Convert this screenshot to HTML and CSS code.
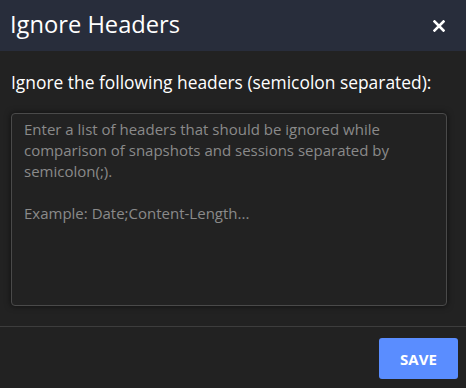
FILE: index.html
```html
<!DOCTYPE html>
<html lang="en">
<head>
    <meta charset="UTF-8">
    <meta name="viewport" content="width=device-width, initial-scale=1.0">
    <title>Ignore Headers</title>
    <link rel="stylesheet" href="styles.css">
</head>
<body>
    <div class="dialog">
        <div class="dialog-header">
            <h2>Ignore Headers</h2>
            <button class="close" aria-label="Close">
                <svg width="12" height="12" viewBox="0 0 12 12">
                    <path d="M1.5 1.5 L10.5 10.5 M10.5 1.5 L1.5 10.5" stroke="#fff" stroke-width="2.6" stroke-linecap="square"/>
                </svg>
            </button>
        </div>
        <div class="dialog-body">
            <label for="headers">Ignore the following headers (semicolon separated):</label>
            <textarea id="headers" placeholder="Enter a list of headers that should be ignored while comparison of snapshots and sessions separated by semicolon(;).&#10;&#10;Example: Date;Content-Length..." autofocus></textarea>
        </div>
        <div class="dialog-footer">
            <button class="save">SAVE</button>
        </div>
    </div>
</body>
</html>
```

FILE: styles.css
```css
html, body {
    margin: 0;
    padding: 0;
    background-color: #222222;
}
body {
    font-family: "Open Sans", sans-serif;
    color: #fff;
    width: 466px;
    height: 388px;
    overflow: hidden;
}
.dialog-header {
    height: 51px;
    background-color: #282d3b;
    display: flex;
    align-items: center;
    justify-content: space-between;
    padding: 0 21px 0 10px;
    box-sizing: border-box;
}
.dialog-header h2 {
    margin: 0;
    font-size: 23.7px;
    font-weight: 400;
    line-height: 30px;
    margin-top: -3px;
}
.close {
    background: none;
    border: none;
    padding: 0;
    width: 12px;
    height: 12px;
    cursor: pointer;
    display: flex;
}
.dialog-body {
    padding: 20px 19px 20px 11px;
    border-bottom: 1px solid #3d3d3d;
}
.dialog-body label {
    display: block;
    font-size: 17.4px;
    line-height: 22px;
    margin-bottom: 20px;
}
.dialog-body textarea {
    display: block;
    width: 100%;
    height: 193px;
    box-sizing: border-box;
    background-color: #222222;
    border: 1px solid #4a4a4a;
    border-radius: 4px;
    box-shadow: 0 0 6px rgba(0, 0, 0, 0.6);
    color: #ddd;
    font-family: "Open Sans", sans-serif;
    font-size: 15px;
    line-height: 21px;
    padding: 5px 12px;
    resize: none;
    outline: none;
    caret-color: #fff;
}
.dialog-body textarea::placeholder {
    color: #8a8a8a;
}
.dialog-footer {
    display: flex;
    justify-content: flex-end;
    padding: 11px 8px;
}
.save {
    width: 79px;
    height: 41px;
    background-color: #5a8dff;
    color: #fff;
    border: none;
    border-radius: 3px;
    font-family: "Open Sans", sans-serif;
    font-size: 15px;
    font-weight: 700;
    cursor: pointer;
}
```
